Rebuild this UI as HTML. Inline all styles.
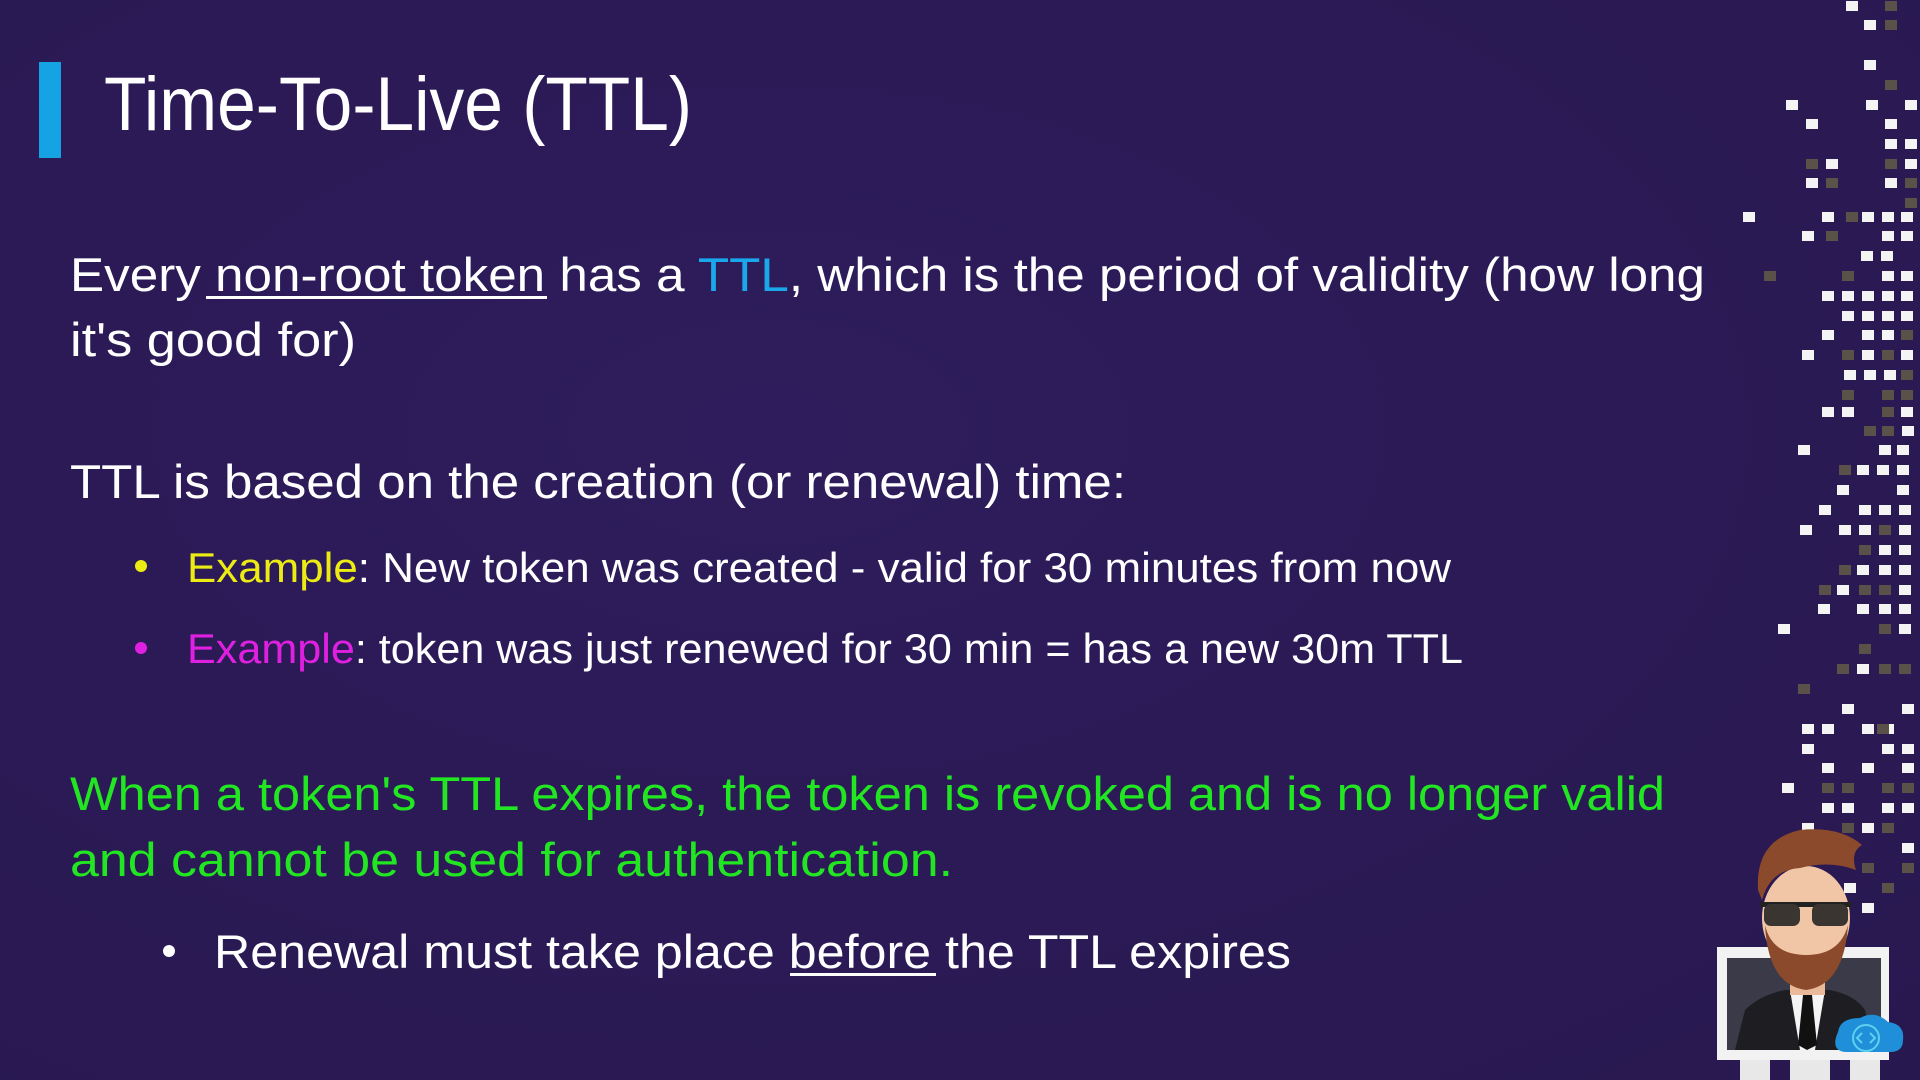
<!DOCTYPE html>
<html><head><meta charset="utf-8"><style>
html,body{margin:0;padding:0;background:#2b1a57;}
svg{display:block}
text{font-family:"Liberation Sans",Arial,sans-serif;}
</style></head><body>
<svg width="1920" height="1080" viewBox="0 0 1920 1080" xmlns="http://www.w3.org/2000/svg">
<defs>
<radialGradient id="bg" cx="0.4" cy="0.4" r="0.9">
<stop offset="0" stop-color="#2e1c5c"/><stop offset="1" stop-color="#28184f"/>
</radialGradient>
</defs>
<rect width="1920" height="1080" fill="url(#bg)"/>
<rect x="39" y="62" width="22" height="96" fill="#16a3e4"/>
<text x="104" y="130" font-size="76" fill="#fff" textLength="588" lengthAdjust="spacingAndGlyphs">Time-To-Live (TTL)</text>

<g font-size="47" fill="#fff">
<text x="70" y="291" textLength="1635" lengthAdjust="spacingAndGlyphs">Every non-root token has a <tspan fill="#1aa8ea">TTL</tspan>, which is the period of validity (how long</text>
<text x="70" y="356" textLength="286" lengthAdjust="spacingAndGlyphs">it's good for)</text>
<text x="70" y="498" textLength="1056" lengthAdjust="spacingAndGlyphs">TTL is based on the creation (or renewal) time:</text>
</g>
<rect x="206" y="296" width="341" height="3" fill="#fff"/>

<circle cx="141" cy="566" r="6" fill="#ecec14"/>
<circle cx="141" cy="648" r="6" fill="#e020e0"/>
<g font-size="42" fill="#fff">
<text x="187" y="582" textLength="1264" lengthAdjust="spacingAndGlyphs"><tspan fill="#ecec14">Example</tspan>: New token was created - valid for 30 minutes from now</text>
<text x="187" y="663" textLength="1276" lengthAdjust="spacingAndGlyphs"><tspan fill="#e020e0">Example</tspan>: token was just renewed for 30 min = has a new 30m TTL</text>
</g>

<g font-size="47" fill="#22e622">
<text x="70" y="810" textLength="1595" lengthAdjust="spacingAndGlyphs">When a token's TTL expires, the token is revoked and is no longer valid</text>
<text x="70" y="876" textLength="883" lengthAdjust="spacingAndGlyphs">and cannot be used for authentication.</text>
</g>
<circle cx="169" cy="951" r="6" fill="#fff"/>
<text x="214" y="968" font-size="47" fill="#fff" textLength="1077" lengthAdjust="spacingAndGlyphs">Renewal must take place before the TTL expires</text>
<rect x="790" y="973" width="146" height="3" fill="#fff"/>

<g transform="translate(-6,-5)">
<g fill="#f4f4f4">
<rect x="1852" y="6" width="12" height="10"/><rect x="1870" y="25" width="12" height="10"/><rect x="1870" y="65" width="12" height="10"/>
<rect x="1792" y="105" width="12" height="10"/><rect x="1872" y="105" width="12" height="10"/><rect x="1911" y="105" width="12" height="10"/>
<rect x="1812" y="124" width="12" height="10"/><rect x="1891" y="124" width="12" height="10"/>
<rect x="1891" y="144" width="12" height="10"/><rect x="1911" y="144" width="12" height="10"/>
<rect x="1832" y="164" width="12" height="10"/><rect x="1911" y="164" width="12" height="10"/>
<rect x="1812" y="183" width="12" height="10"/><rect x="1891" y="183" width="12" height="10"/>
<rect x="1749" y="217" width="12" height="10"/><rect x="1828" y="217" width="12" height="10"/><rect x="1868" y="217" width="12" height="10"/><rect x="1888" y="217" width="12" height="10"/><rect x="1907" y="217" width="12" height="10"/>
<rect x="1808" y="236" width="12" height="10"/><rect x="1888" y="236" width="12" height="10"/><rect x="1907" y="236" width="12" height="10"/>
<rect x="1867" y="256" width="12" height="10"/><rect x="1887" y="256" width="12" height="10"/>
<rect x="1888" y="276" width="12" height="10"/><rect x="1907" y="276" width="12" height="10"/>
<rect x="1828" y="296" width="12" height="10"/><rect x="1848" y="296" width="12" height="10"/><rect x="1868" y="296" width="12" height="10"/><rect x="1888" y="296" width="12" height="10"/><rect x="1907" y="296" width="12" height="10"/>
<rect x="1848" y="316" width="12" height="10"/><rect x="1868" y="316" width="12" height="10"/><rect x="1888" y="316" width="12" height="10"/><rect x="1907" y="316" width="12" height="10"/>
<rect x="1828" y="335" width="12" height="10"/><rect x="1868" y="335" width="12" height="10"/><rect x="1888" y="335" width="12" height="10"/>
<rect x="1808" y="355" width="12" height="10"/><rect x="1868" y="355" width="12" height="10"/><rect x="1907" y="355" width="12" height="10"/>
<rect x="1850" y="375" width="12" height="10"/><rect x="1870" y="375" width="12" height="10"/><rect x="1890" y="375" width="12" height="10"/>
<rect x="1828" y="412" width="12" height="10"/><rect x="1848" y="412" width="12" height="10"/><rect x="1907" y="412" width="12" height="10"/>
<rect x="1908" y="431" width="12" height="10"/>
<rect x="1804" y="450" width="12" height="10"/><rect x="1885" y="450" width="12" height="10"/><rect x="1903" y="450" width="12" height="10"/>
<rect x="1863" y="470" width="12" height="10"/><rect x="1883" y="470" width="12" height="10"/><rect x="1903" y="470" width="12" height="10"/>
<rect x="1843" y="490" width="12" height="10"/><rect x="1903" y="490" width="12" height="10"/>
<rect x="1825" y="510" width="12" height="10"/><rect x="1865" y="510" width="12" height="10"/><rect x="1885" y="510" width="12" height="10"/><rect x="1905" y="510" width="12" height="10"/>
<rect x="1806" y="530" width="12" height="10"/><rect x="1845" y="530" width="12" height="10"/><rect x="1865" y="530" width="12" height="10"/><rect x="1905" y="530" width="12" height="10"/>
<rect x="1885" y="550" width="12" height="10"/><rect x="1905" y="550" width="12" height="10"/>
<rect x="1863" y="570" width="12" height="10"/><rect x="1885" y="570" width="12" height="10"/><rect x="1905" y="570" width="12" height="10"/>
<rect x="1843" y="590" width="12" height="10"/><rect x="1905" y="590" width="12" height="10"/>
<rect x="1824" y="609" width="12" height="10"/><rect x="1863" y="609" width="12" height="10"/><rect x="1885" y="609" width="12" height="10"/><rect x="1905" y="609" width="12" height="10"/>
<rect x="1784" y="629" width="12" height="10"/><rect x="1905" y="629" width="12" height="10"/>
<rect x="1863" y="669" width="12" height="10"/>
<rect x="1848" y="709" width="12" height="10"/><rect x="1908" y="709" width="12" height="10"/>
<rect x="1808" y="729" width="12" height="10"/><rect x="1828" y="729" width="12" height="10"/><rect x="1868" y="729" width="12" height="10"/><rect x="1888" y="729" width="12" height="10"/>
<rect x="1808" y="749" width="12" height="10"/><rect x="1888" y="749" width="12" height="10"/><rect x="1908" y="749" width="12" height="10"/>
<rect x="1828" y="768" width="12" height="10"/><rect x="1868" y="768" width="12" height="10"/><rect x="1908" y="768" width="12" height="10"/>
<rect x="1788" y="788" width="12" height="10"/>
<rect x="1828" y="808" width="12" height="10"/><rect x="1848" y="808" width="12" height="10"/><rect x="1888" y="808" width="12" height="10"/><rect x="1908" y="808" width="12" height="10"/>
<rect x="1808" y="828" width="12" height="10"/><rect x="1868" y="828" width="12" height="10"/>
<rect x="1908" y="848" width="12" height="10"/>
<rect x="1850" y="888" width="12" height="10"/><rect x="1868" y="908" width="12" height="10"/>
</g>
<g fill="#5a5248">
<rect x="1891" y="6" width="12" height="10"/><rect x="1891" y="25" width="12" height="10"/><rect x="1891" y="85" width="12" height="10"/>
<rect x="1812" y="164" width="12" height="10"/><rect x="1891" y="164" width="12" height="10"/><rect x="1832" y="183" width="12" height="10"/><rect x="1911" y="183" width="12" height="10"/>
<rect x="1911" y="203" width="12" height="10"/><rect x="1852" y="217" width="12" height="10"/><rect x="1832" y="236" width="12" height="10"/>
<rect x="1770" y="276" width="12" height="10"/><rect x="1848" y="276" width="12" height="10"/><rect x="1907" y="335" width="12" height="10"/>
<rect x="1848" y="355" width="12" height="10"/><rect x="1888" y="355" width="12" height="10"/><rect x="1907" y="375" width="12" height="10"/>
<rect x="1848" y="395" width="12" height="10"/><rect x="1888" y="395" width="12" height="10"/><rect x="1907" y="395" width="12" height="10"/>
<rect x="1888" y="412" width="12" height="10"/><rect x="1870" y="431" width="12" height="10"/><rect x="1888" y="431" width="12" height="10"/>
<rect x="1845" y="470" width="12" height="10"/><rect x="1885" y="530" width="12" height="10"/><rect x="1865" y="550" width="12" height="10"/>
<rect x="1845" y="570" width="12" height="10"/><rect x="1825" y="590" width="12" height="10"/><rect x="1865" y="590" width="12" height="10"/><rect x="1885" y="590" width="12" height="10"/>
<rect x="1885" y="629" width="12" height="10"/><rect x="1865" y="649" width="12" height="10"/><rect x="1843" y="669" width="12" height="10"/><rect x="1885" y="669" width="12" height="10"/><rect x="1905" y="669" width="12" height="10"/>
<rect x="1804" y="689" width="12" height="10"/><rect x="1883" y="729" width="12" height="10"/>
<rect x="1828" y="788" width="12" height="10"/><rect x="1848" y="788" width="12" height="10"/><rect x="1888" y="788" width="12" height="10"/><rect x="1908" y="788" width="12" height="10"/>
<rect x="1848" y="828" width="12" height="10"/><rect x="1888" y="828" width="12" height="10"/><rect x="1868" y="868" width="12" height="10"/><rect x="1908" y="868" width="12" height="10"/><rect x="1888" y="888" width="12" height="10"/>
</g>
</g>

<rect x="1717" y="947" width="172" height="113" fill="#f2f2f2"/>
<rect x="1727" y="958" width="154" height="92" fill="#3a3a48"/>
<rect x="1740" y="1060" width="30" height="20" fill="#e8e8e8"/><rect x="1790" y="1060" width="40" height="20" fill="#e8e8e8"/><rect x="1850" y="1060" width="30" height="20" fill="#e8e8e8"/>
<path d="M1735 1050 L1745 1010 Q1760 995 1785 990 L1830 990 Q1855 995 1865 1010 L1875 1050 Z" fill="#1e1e22"/>
<path d="M1790 990 L1825 990 L1815 1050 L1800 1050 Z" fill="#f4f4f4"/>
<path d="M1803 995 L1812 995 L1817 1045 L1807 1050 L1798 1045 Z" fill="#111"/>
<rect x="1790" y="960" width="35" height="35" fill="#e9b99a"/>
<ellipse cx="1806" cy="918" rx="44" ry="52" fill="#f0c6a6"/>
<path d="M1765 925 Q1768 985 1806 990 Q1844 985 1848 925 Q1840 955 1806 955 Q1772 955 1765 925 Z" fill="#8b4a2c"/>
<rect x="1795" y="948" width="22" height="6" rx="3" fill="#f0c6a6"/>
<path d="M1758 890 Q1755 840 1800 830 Q1840 826 1862 845 Q1850 852 1856 870 Q1830 860 1800 868 Q1770 870 1762 900 Z" fill="#8b4a2c"/>
<rect x="1760" y="902" width="92" height="5" fill="#222"/>
<rect x="1764" y="904" width="36" height="22" rx="7" fill="#3a3530"/>
<rect x="1812" y="904" width="36" height="22" rx="7" fill="#3a3530"/>
<path d="M1838 1032 Q1840 1018 1860 1018 Q1875 1010 1888 1022 Q1905 1024 1903 1040 Q1903 1052 1890 1052 L1845 1052 Q1830 1050 1838 1032 Z" fill="#1e8fd8"/>
<circle cx="1866" cy="1038" r="13" fill="none" stroke="#5fd0f0" stroke-width="2"/>
<path d="M1862 1033 L1857 1038 L1862 1043 M1870 1033 L1875 1038 L1870 1043" fill="none" stroke="#5fd0f0" stroke-width="2"/>
</svg>
</body></html>
